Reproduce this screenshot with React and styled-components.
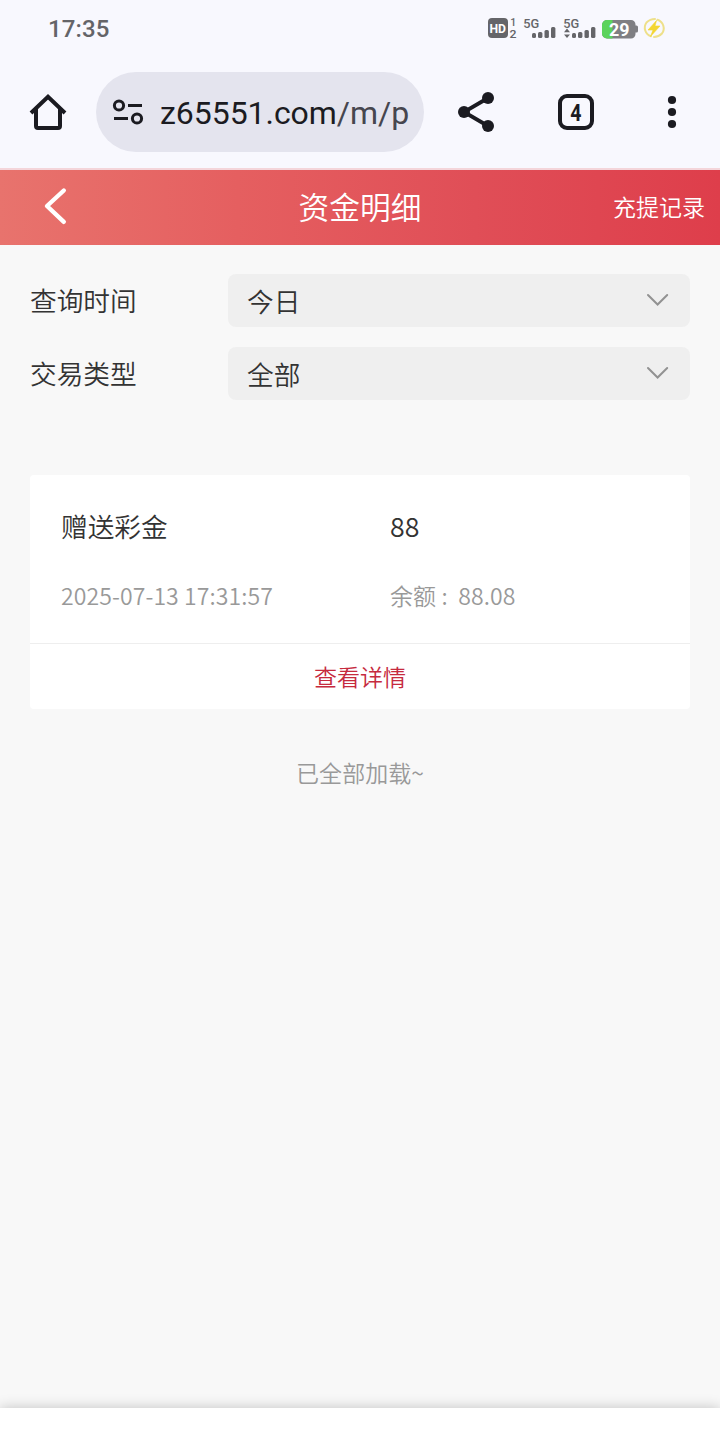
import React from "react";
import styled, { createGlobalStyle } from "styled-components";

const GlobalStyle = createGlobalStyle`
  * { box-sizing: border-box; }
  body {
    margin: 0;
    background: #f7f7f7;
    font-family: "Noto Sans CJK SC", "Noto Sans", sans-serif;
    font-weight: 350;
    color: #333;
  }
`;

const Screen = styled.div`
  display: flex;
  flex-direction: column;
  width: 720px;
  height: 1429px;
  overflow: hidden;
  background: #f8f8f8;
`;

const StatusBar = styled.div`
  display: flex;
  align-items: center;
  justify-content: space-between;
  height: 56px;
  padding: 0 54px 0 48px;
  background: #f8f8fe;
`;

const Clock = styled.span`
  font: 500 24px/28px Roboto, sans-serif;
  letter-spacing: 0.1px;
  color: #646468;
  padding-top: 2px;
`;

const BrowserBar = styled.div`
  display: flex;
  align-items: center;
  height: 114px;
  padding: 0 28px;
  background: #f8f8fe;
  border-bottom: 2px solid #f4d5da;
`;

const AddressPill = styled.div`
  display: flex;
  align-items: center;
  width: 328px;
  height: 80px;
  margin: 0 32px 0 28px;
  padding-left: 16px;
  border-radius: 40px;
  background: #e4e4ee;
`;

const Url = styled.span`
  margin-left: 16px;
  padding-top: 2px;
  font: 400 32px/38px Roboto, sans-serif;
  letter-spacing: -0.05px;
  color: #1b1b21;
  white-space: nowrap;
`;

const UrlPath = styled.span`
  color: #46464e;
`;

const TabCount = styled.div`
  display: flex;
  align-items: center;
  justify-content: center;
  width: 36px;
  height: 36px;
  margin: 0 72px 0 62px;
  border: 4px solid #1b1b21;
  border-radius: 9px;
  font: 700 23.5px/24px Roboto, sans-serif;
  color: #1b1b21;
`;

const TabDigit = styled.span`
  padding-top: 2px;
  transform: scaleX(0.83);
`;

const TitleBar = styled.header`
  display: grid;
  grid-template-columns: 1fr auto 1fr;
  align-items: center;
  height: 75px;
  padding: 0 15px 3px 43px;
  background: linear-gradient(90deg, #e8736d 0%, #e55f60 33%, #e04e57 66%, #de3e4b 100%);
  color: #fff;
`;

const Title = styled.h1`
  margin: 0 0 0 -28px;
  font-size: 30.72px;
  line-height: 44px;
  font-weight: inherit;
`;

const RecordsLink = styled.a`
  justify-self: end;
  font-size: 23.04px;
  line-height: 34px;
`;

const Filters = styled.section`
  display: flex;
  flex-direction: column;
  gap: 20px;
  padding: 29px 30px 0;
`;

const FilterRow = styled.div`
  display: flex;
  align-items: center;
  height: 53px;
  font-size: 26.7px;
`;

const FilterLabel = styled.span`
  width: 198px;
  padding-bottom: 2px;
`;

const Select = styled.div`
  display: flex;
  flex: 1;
  align-items: center;
  justify-content: space-between;
  height: 53px;
  padding: 0 21px 0 19px;
  border-radius: 8px;
  background: #efefef;
`;

const SelectValue = styled.span`
  padding-top: 0;
`;

const Card = styled.article`
  margin: 75px 30px 0;
  height: 234px;
  border-radius: 4px;
  background: #fff;
`;

const CardBody = styled.div`
  display: grid;
  grid-template-columns: 329px 1fr;
  grid-template-rows: 40px 34px;
  row-gap: 32px;
  height: 168px;
  padding: 31px 31px 0;
`;

const Primary = styled.span`
  font-size: 26.7px;
  line-height: 40px;
`;

const Secondary = styled.span`
  font-size: 23.04px;
  line-height: 34px;
  letter-spacing: 0.09px;
  color: #999;
  white-space: pre;
`;

const DetailButton = styled.div`
  height: 66px;
  border-top: 1px solid #eee;
  text-align: center;
  font-size: 23.04px;
  line-height: 65px;
  color: #c62a3e;
`;

const EndNote = styled.p`
  flex: 1;
  margin: 0;
  padding-top: 46px;
  text-align: center;
  font-size: 23.04px;
  line-height: 34px;
  color: #999;
`;

const BottomBar = styled.footer`
  height: 21px;
  background: #fff;
  box-shadow: 0 0 14px rgba(0, 0, 0, 0.22);
`;

const ink = "#1b1b21";
const grey = "#656569";

const StatusIcons = () => (
  <svg width="178" height="24" viewBox="488 16 178 24" fontFamily="Roboto, sans-serif" fontWeight="700">
    <rect x="488" y="18" width="20" height="20" rx="4" fill={grey} />
    <text x="489.5" y="32.5" fontSize="12.5" textLength="16.5" lengthAdjust="spacingAndGlyphs" fill="#fff">HD</text>
    <text x="510.2" y="26" fontSize="10.5" fontWeight="500" fill={grey}>1</text>
    <text x="509.5" y="37.5" fontSize="11" fontWeight="500" textLength="7" lengthAdjust="spacingAndGlyphs" fill={grey}>2</text>
    {[0, 40].map((dx) => (
      <g key={dx} transform={`translate(${dx} 0)`} fill={grey}>
        <text x="523.2" y="28" fontSize="13.5" fontWeight="500" textLength="16" lengthAdjust="spacingAndGlyphs">5G</text>
        <rect x="532" y="33" width="4" height="5" rx="1.5" />
        <rect x="538" y="32" width="4.4" height="6" rx="1.5" />
        <rect x="544.5" y="30" width="4.4" height="8" rx="1.5" />
        <rect x="551" y="27" width="4.4" height="11" rx="1.5" />
      </g>
    ))}
    <path d="M564 32.2l3-3.6 3 3.6zM564 34.4h6l-3 3.6z" fill={grey} />
    <path d="M607 20h24a4.500 4.500 0 0 1 4.500 4.500V25.500h1a1.500 1.500 0 0 1 1.500 1.500v4a1.500 1.500 0 0 1-1.500 1.500h-1V34a4.500 4.500 0 0 1-4.500 4.500H607a5 5 0 0 1-5-5V25a5 5 0 0 1 5-5z" fill="#7f7f83" />
    <path d="M607 20h5.500v18.500H607a5 5 0 0 1-5-5V25a5 5 0 0 1 5-5z" fill="#5bd35b" />
    <text x="609" y="35.8" fontSize="17.5" textLength="20.500" lengthAdjust="spacingAndGlyphs" fill="#fff">29</text>
    <g fill="none" stroke="#eee08a" strokeWidth="2" strokeLinecap="round">
      <path d="M651 36.300A9 9 0 0 1 646.500 22.500Q650 19 655 19" />
      <path d="M657.500 19.700A9 9 0 0 1 662 33.500Q658.500 37 654 37" />
    </g>
    <path d="M656.500 20.500l-8.500 9.500h5L650.500 36.500l9.500-10.500h-5z" fill="#f3d632" stroke="#f3d632" strokeWidth="0.600" strokeLinejoin="round" />
  </svg>
);

const HomeIcon = () => (
  <svg width="40" height="40" viewBox="28 92 40 40" fill="none" stroke={ink} strokeWidth="4">
    <path d="M31 113L48 96.800 65 113" />
    <path d="M36 108.500V126a2 2 0 0 0 2 2H58a2 2 0 0 0 2-2V108.500" />
  </svg>
);

const TuneIcon = () => (
  <svg width="32" height="28" viewBox="112 98 32 28" fill="none" stroke={ink} strokeWidth="3">
    <circle cx="119" cy="105.500" r="4.600" />
    <path d="M128 105.500h14M114 118.500h14" />
    <circle cx="137" cy="118.500" r="4.600" />
  </svg>
);

const ShareIcon = () => (
  <svg width="40" height="40" viewBox="456 92 40 40" fill={ink}>
    <path d="M488 98L464 112 488 126" fill="none" stroke={ink} strokeWidth="3.800" />
    <circle cx="488" cy="98" r="6" />
    <circle cx="464" cy="112" r="6" />
    <circle cx="488" cy="126" r="6" />
  </svg>
);

const MoreIcon = () => (
  <svg width="12" height="36" viewBox="666 94 12 36" fill={ink}>
    <circle cx="672" cy="100" r="4.100" />
    <circle cx="672" cy="112" r="4.100" />
    <circle cx="672" cy="124" r="4.100" />
  </svg>
);

const BackIcon = () => (
  <svg width="26" height="40" viewBox="43 186 26 40" fill="none" stroke="#fff" strokeWidth="4.400" strokeLinecap="round" strokeLinejoin="round">
    <path d="M63.800 190.500L47 206 63.800 221.800" />
  </svg>
);

const ChevronIcon = () => (
  <svg width="24" height="18" viewBox="0 0 24 18" fill="none" stroke="#929292" strokeWidth="2" strokeLinecap="round">
    <path d="M3 3l9.600 9.500L22.200 3" />
  </svg>
);

const filters = [
  { label: "查询时间", value: "今日" },
  { label: "交易类型", value: "全部" },
];

export default function App() {
  return (
    <Screen>
      <GlobalStyle />
      <StatusBar>
        <Clock>17:35</Clock>
        <StatusIcons />
      </StatusBar>
      <BrowserBar>
        <HomeIcon />
        <AddressPill>
          <TuneIcon />
          <Url>z65551.com<UrlPath>/m/p</UrlPath></Url>
        </AddressPill>
        <ShareIcon />
        <TabCount><TabDigit>4</TabDigit></TabCount>
        <MoreIcon />
      </BrowserBar>
      <TitleBar>
        <BackIcon />
        <Title>资金明细</Title>
        <RecordsLink>充提记录</RecordsLink>
      </TitleBar>
      <Filters>
        {filters.map((f) => (
          <FilterRow key={f.label}>
            <FilterLabel>{f.label}</FilterLabel>
            <Select>
              <SelectValue>{f.value}</SelectValue>
              <ChevronIcon />
            </Select>
          </FilterRow>
        ))}
      </Filters>
      <Card>
        <CardBody>
          <Primary>赠送彩金</Primary>
          <Primary>88</Primary>
          <Secondary>2025-07-13 17:31:57</Secondary>
          <Secondary>余额 :  88.08</Secondary>
        </CardBody>
        <DetailButton>查看详情</DetailButton>
      </Card>
      <EndNote>已全部加载~</EndNote>
      <BottomBar />
    </Screen>
  );
}
